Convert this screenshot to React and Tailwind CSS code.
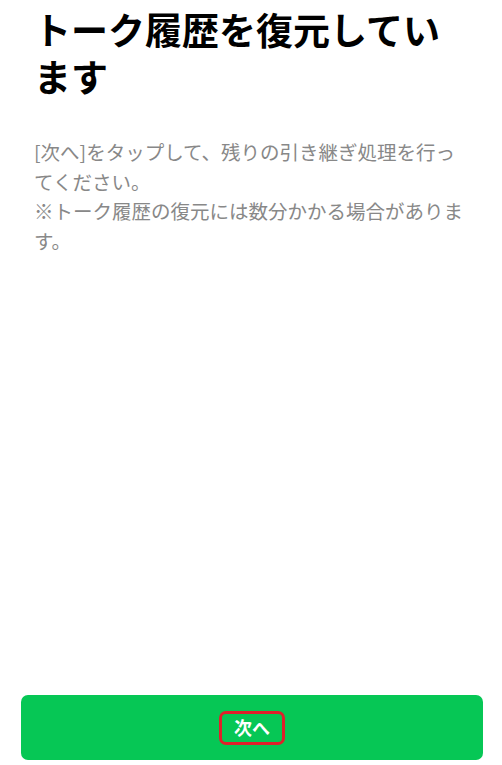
import React from "react";

export default function App() {
  const font = {
    fontFamily: '"Noto Sans CJK JP", "Noto Sans", sans-serif',
  };

  return (
    <div className="h-[765px] w-full bg-white flex flex-col" style={font}>
      <div className="pl-[34px] pr-[20px] pt-[6px]">
        <h1 className="text-[37px] leading-[47px] font-bold text-black">
          <span className="block">トーク履歴を復元してい</span>
          <span className="block">ます</span>
        </h1>
        <p className="mt-[37px] text-[19.5px] leading-[29.5px] text-[#888888] whitespace-nowrap">
          [次へ]をタップして、残りの引き継ぎ処理を行っ
          <br />
          てください。
          <br />
          ※トーク履歴の復元には数分かかる場合がありま
          <br />
          す。
        </p>
      </div>
      <div className="flex-1" />
      <button className="ml-[21px] mr-[19px] mb-[5px] h-[65px] rounded-[7px] bg-[#06c755] flex items-center justify-center">
        <span className="border-[3px] border-[#e0202a] rounded-[7px] w-[66px] h-[34px] flex items-center justify-center text-white font-bold text-[18px]">
          次へ
        </span>
      </button>
    </div>
  );
}
